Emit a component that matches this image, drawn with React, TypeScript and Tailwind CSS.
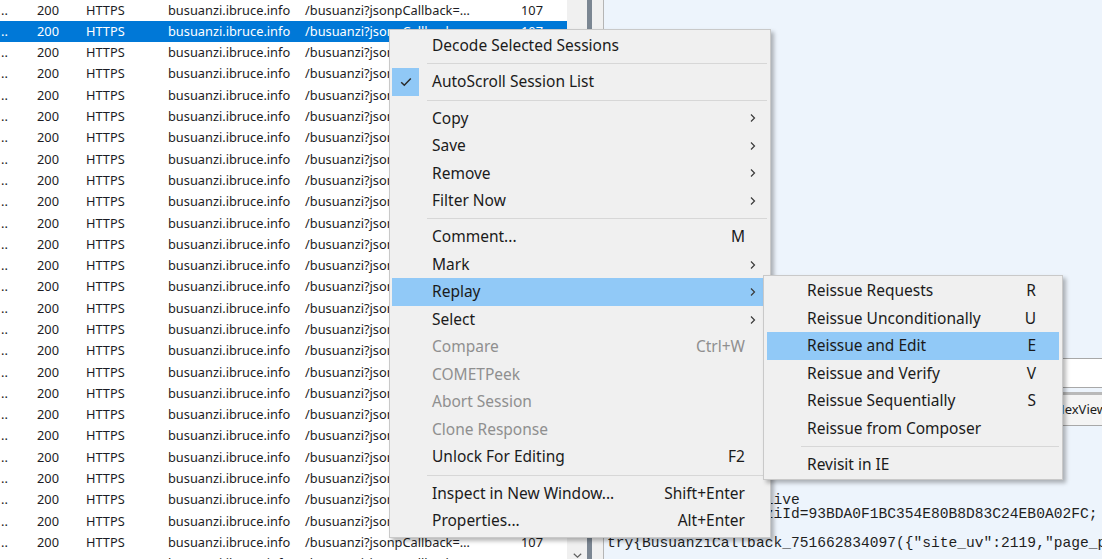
import React from "react";

const ROWS = 27;

function Chevron() {
  return (
    <svg width="6" height="10" viewBox="0 0 6 10" className="block">
      <path d="M1 1.5 L4.5 5 L1 8.5" fill="none" stroke="#3a3a3a" strokeWidth="1.2" />
    </svg>
  );
}

function Check() {
  return (
    <svg width="12" height="10" viewBox="0 0 12 10" className="block">
      <path d="M1.2 5.2 L4.3 8.2 L10.8 1.5" fill="none" stroke="#2a2a2a" strokeWidth="1.5" />
    </svg>
  );
}

type ItemProps = {
  label: string;
  shortcut?: string;
  arrow?: boolean;
  disabled?: boolean;
  active?: boolean;
  checked?: boolean;
  sub?: boolean;
};

function Item({ label, shortcut, arrow, disabled, active, checked, sub }: ItemProps) {
  return (
    <div
      className={`relative flex items-center h-[27.5px] ${sub ? "mx-[3px]" : "mx-[2px]"} pl-[40px] pr-[12px] ${
        active ? "bg-[#91c9f7]" : ""
      } ${disabled ? "text-[#8f8f8f]" : "text-[#1b1b1b]"}`}
    >
      {checked && (
        <div className="absolute left-0 top-0 w-[27px] h-full bg-[#90c8f6] flex items-center justify-center">
          <Check />
        </div>
      )}
      <span className="flex-1 whitespace-nowrap">{label}</span>
      {shortcut && <span className="mr-[5px] whitespace-nowrap">{shortcut}</span>}
      <div className="w-[6px] flex items-center">{arrow && <Chevron />}</div>
    </div>
  );
}

function Sep() {
  return (
    <div className="h-[8.75px] flex items-center pl-[37px] pr-[3px]">
      <div className="h-px w-full bg-[#d7d7d7]" />
    </div>
  );
}

function ListRow({ selected }: { selected: boolean }) {
  return (
    <div
      className={`flex items-center h-[21.3px] whitespace-nowrap ${
        selected ? "bg-[#0078d7] text-white" : "text-[#1c1c24]"
      }`}
    >
      <span className="w-[37px] pl-[1px]">..</span>
      <span className="w-[49px]">200</span>
      <span className="w-[82px]">HTTPS</span>
      <span className="w-[137px]">busuanzi.ibruce.info</span>
      <span className="w-[216px]">/busuanzi?jsonpCallback=…</span>
      <span>107</span>
    </div>
  );
}

const tabs = [
  { t: "Transformer", w: "w-[98px]" },
  { t: "Headers", w: "w-[74px]" },
  { t: "TextView", w: "w-[82px]" },
  { t: "SyntaxView", w: "w-[96px]" },
  { t: "ImageView", w: "w-[93px]" },
  { t: "HexView", w: "w-[68px]" },
  { t: "WebView", w: "w-[70px]" },
];

const lines = [
  "HTTP/1.1 200 OK",
  "Date: Tue, 26 Nov 2024 08:12:34 GMT",
  "Content-Type: application/json",
  "Server: nginx",
  "Connection: keep-alive",
  "Set-Cookie: busuanziId=93BDA0F1BC354E80B8D83C24EB0A02FC; Path=/; Max-Age=31536000",
  "",
  'try{BusuanziCallback_751662834097({"site_uv":2119,"page_pv":107,"version":2.4,"site_pv":5113});}catch(e){}',
];

export default function App() {
  return (
    <div className="relative w-[1102px] h-[559px] overflow-hidden flex bg-white font-['Noto_Sans',sans-serif]">
      {/* Session list */}
      <div className="w-[567px] h-full bg-white text-[12.8px] overflow-hidden">
        <div className="-mt-[0.5px]">
          {Array.from({ length: ROWS }).map((_, i) => (
            <ListRow key={i} selected={i === 1} />
          ))}
        </div>
      </div>
      {/* list scrollbar */}
      <div className="w-[20px] h-full bg-[#f0f0f0] flex flex-col justify-end items-center">
        <div className="h-[6px] flex items-start">
          <svg width="9" height="5" viewBox="0 0 9 5" className="block">
            <path d="M0.8 0.8 L4.5 4.2 L8.2 0.8" fill="none" stroke="#606060" strokeWidth="1.2" />
          </svg>
        </div>
      </div>
      {/* splitter */}
      <div className="w-[5px] h-full bg-[#7b8692]" />
      <div className="w-[11px] h-full bg-[#f0f0f0]" />
      {/* right panel */}
      <div className="flex-1 h-full flex flex-col bg-[#edf4fc] border-l border-[#b5b5b5] min-w-0">
        <div className="h-[358px]" />
        <div className="h-[30px] bg-white border-y border-[#a8a8a8]" />
        <div className="h-[4px]" />
        <div className="h-[34px] flex items-stretch pl-[2px] border-b border-[#a8a8a8] whitespace-nowrap text-[13px] text-[#1b1b1b]">
          {tabs.map((tb) => (
            <div
              key={tb.t}
              className={`${tb.w} shrink-0 flex items-center pl-[6px] bg-[#f4f4f4] border-t-[3px] border-r border-[#b9b9b9]`}
            >
              {tb.t}
            </div>
          ))}
        </div>
        <div className="flex-1 pt-[8.5px] pl-[3px] font-['Liberation_Mono',monospace] text-[14.6px] leading-[14.5px] text-[#1e1e1e] whitespace-pre overflow-hidden">
          {lines.map((l, i) => (
            <div key={i} className="h-[14.5px]">
              {l}
            </div>
          ))}
        </div>
      </div>

      {/* main context menu */}
      <div className="absolute left-[389px] top-[29px] w-[382px] bg-[#f0f0f0] border border-[#c9c9c9] py-[2px] text-[15.5px] shadow-[3px_3px_4px_rgba(0,0,0,0.28)]">
        <Item label="Decode Selected Sessions" />
        <Sep />
        <Item label="AutoScroll Session List" checked />
        <Sep />
        <Item label="Copy" arrow />
        <Item label="Save" arrow />
        <Item label="Remove" arrow />
        <Item label="Filter Now" arrow />
        <Sep />
        <Item label="Comment..." shortcut="M" />
        <Item label="Mark" arrow />
        <Item label="Replay" arrow active />
        <Item label="Select" arrow />
        <Item label="Compare" shortcut="Ctrl+W" disabled />
        <Item label="COMETPeek" disabled />
        <Item label="Abort Session" disabled />
        <Item label="Clone Response" disabled />
        <Item label="Unlock For Editing" shortcut="F2" />
        <Sep />
        <Item label="Inspect in New Window..." shortcut="Shift+Enter" />
        <Item label="Properties..." shortcut="Alt+Enter" />
      </div>

      {/* replay submenu */}
      <div className="absolute left-[763px] top-[275px] w-[300px] bg-[#f0f0f0] border border-[#c9c9c9] py-[1px] text-[15.5px] shadow-[3px_3px_4px_rgba(0,0,0,0.28)]">
        <Item sub label="Reissue Requests" shortcut="R" />
        <Item sub label="Reissue Unconditionally" shortcut="U" />
        <Item sub label="Reissue and Edit" shortcut="E" active />
        <Item sub label="Reissue and Verify" shortcut="V" />
        <Item sub label="Reissue Sequentially" shortcut="S" />
        <Item sub label="Reissue from Composer" />
        <Sep />
        <Item sub label="Revisit in IE" />
      </div>
    </div>
  );
}
